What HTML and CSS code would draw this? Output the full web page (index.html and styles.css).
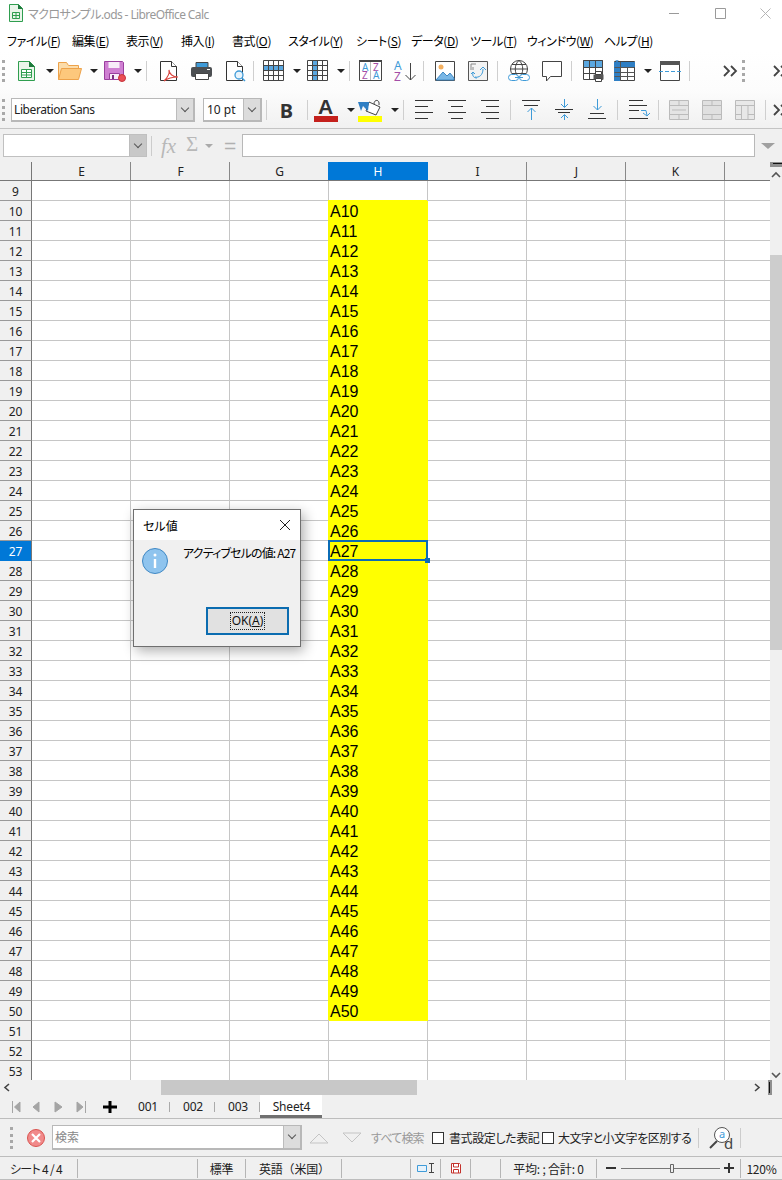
FILE: index.html
```html
<!DOCTYPE html>
<html lang="ja">
<head>
<meta charset="utf-8">
<title>マクロサンプル.ods - LibreOffice Calc</title>
<link rel="stylesheet" href="styles.css">
</head>
<body>
<div class="app">
  <header class="titlebar">
    <svg class="appicon" width="14" height="18" viewBox="0 0 14 18"><path d="M.5.5h9l4 4v13H.5z" fill="#eaf5ea" stroke="#2f9e4f"/><path d="M9 0l5 5H9z" fill="#1f7a3d"/><path d="M3.500 8.500h7v6h-7zM3.500 11.500h7M7 8.500v6" fill="none" stroke="#2f9e4f"/></svg>
    <span class="apptitle">マクロサンプル.ods - LibreOffice Calc</span>
    <div class="winbtns">
      <svg width="112" height="14" viewBox="0 0 112 14"><path d="M0 7.500h10" stroke="#9a9a9a"/><path d="M46.500 2.500h10v10h-10z" fill="none" stroke="#9a9a9a"/><path d="M91.500 2.500l10 10M101.500 2.500l-10 10" stroke="#b5b5b5"/></svg>
    </div>
  </header>
  <nav class="menubar">
    <span>ファイル(<u>F</u>)</span><span>編集(<u>E</u>)</span><span>表示(<u>V</u>)</span><span>挿入(<u>I</u>)</span><span>書式(<u>O</u>)</span><span>スタイル(<u>Y</u>)</span><span>シート(<u>S</u>)</span><span>データ(<u>D</u>)</span><span>ツール(<u>T</u>)</span><span>ウィンドウ(<u>W</u>)</span><span>ヘルプ(<u>H</u>)</span>
  </nav>
  <div class="toolbar t1">
    <i class="grip"></i>
    <svg class="i" viewBox="0 0 33 24"><path d="M8.500 2.500h11l5 5v14h-16z" fill="#eaf5ea" stroke="#2f9e4f"/><path d="M19 2l6 6h-6z" fill="#1f7a3d"/><path d="M11.500 10.500h10v8h-10z" fill="#fff" stroke="#2f9e4f"/><path d="M11.500 13.500h10M11.500 16h10M16.500 10.500v8" stroke="#2f9e4f"/></svg>
    <i class="d"></i>
    <svg class="i" viewBox="0 0 33 24"><path d="M4.500 20.500v-17h8l2 3h10v4" fill="#fbdcaa" stroke="#eda24a"/><path d="M4.500 20.500l3-11h20l-3 11z" fill="#fdc87c" stroke="#eda24a"/></svg>
    <i class="d"></i>
    <svg class="i" viewBox="0 0 33 24"><path d="M6.500 2.500h18l1 1v17h-19z" fill="#cf7fd2" stroke="#9a3f9e"/><path d="M10.500 3h11v6h-11z" fill="#f7ecf8"/><path d="M11.500 14.500h10v6h-10z" fill="#f7ecf8" stroke="#9a3f9e"/><path d="M14 16h2v4h-2z" fill="#7a2f7e"/><circle cx="24" cy="19" r="3.500" fill="#ea4f55" stroke="#c6343a"/></svg>
    <i class="d"></i>
    <i class="s"></i>
    <svg class="i" viewBox="0 0 33 24"><path d="M10.500 2.500h11l5 5v14h-16z" fill="#fff" stroke="#333"/><path d="M21.500 2.500v5h5" fill="#fff" stroke="#333"/><path d="M14 22c3-3 6-7 5-11 0 4 4 7 9 7-5 0-10 1-14 4z" fill="#fff" stroke="#d9453f" stroke-width="1.200"/></svg>
    <svg class="i" viewBox="0 0 33 24"><path d="M13 3.500h12v5H13z" fill="#3f9bd8" stroke="#444"/><rect x="8" y="8" width="21" height="10" rx="2" fill="#4c4f52"/><path d="M12.500 14.500h13v6h-13z" fill="#fff" stroke="#444"/><path d="M24 10.500h3" stroke="#fff"/></svg>
    <svg class="i" viewBox="0 0 33 24"><path d="M10.500 2.500h11l5 5v14h-16z" fill="#fff" stroke="#333"/><path d="M21.500 2.500v5h5" fill="#fff" stroke="#333"/><circle cx="23" cy="16" r="4" fill="#e8f4fc" stroke="#3f9bd8" stroke-width="1.300"/><path d="M26 19l3 3" stroke="#3f9bd8" stroke-width="1.500"/></svg>
    <i class="s"></i>
    <svg class="i" viewBox="0 0 33 24"><path d="M6.500 6.500h20v5h-20z" fill="#5aa7e0"/><path d="M6.500 1.500h20v20h-20zM6.500 6.500h20M6.500 11.500h20M6.500 16.500h20M11.500 1.500v20M16.500 1.500v20M21.500 1.500v20" fill="none" stroke="#444"/></svg>
    <i class="d"></i>
    <svg class="i" viewBox="0 0 33 24"><path d="M11.500 1.500h5v20h-5z" fill="#5aa7e0"/><path d="M6.500 1.500h20v20h-20zM6.500 6.500h20M6.500 11.500h20M6.500 16.500h20M11.500 1.500v20M16.500 1.500v20M21.500 1.500v20" fill="none" stroke="#444"/></svg>
    <i class="d"></i>
    <i class="s"></i>
    <svg class="i" viewBox="0 0 33 24"><path d="M6.500 2.500h22v19h-22z" fill="#fff" stroke="#444"/><path d="M6 1h23v2H6z" fill="#444"/><path d="M17.500 3v18" stroke="#bbb"/><text class="g b" x="9" y="12">A</text><text class="g p" x="9" y="20">Z</text><text class="g p" x="20" y="12">Z</text><text class="g b" x="20" y="20">A</text></svg>
    <svg class="i" viewBox="0 0 33 24"><text class="g2 b" x="8" y="11">A</text><text class="g2 p" x="8" y="22">Z</text><path d="M24.500 4v17M19.500 16l5 5 5-5" fill="none" stroke="#444"/></svg>
    <i class="s"></i>
    <svg class="i" viewBox="0 0 33 24"><path d="M8.500 2.500h19v19h-19z" fill="#fff" stroke="#444"/><circle cx="14" cy="8" r="2.500" fill="#f4b060"/><path d="M9 21l7-8 4 4 3-3 4 5v2z" fill="#79b7e6" stroke="#3f88c4"/></svg>
    <svg class="i" viewBox="0 0 33 24"><path d="M8.500 2.500h19v19h-19z" fill="#f3f3f3" stroke="#555"/><path d="M11 5h5M11 5v6M13 8v3" stroke="#888"/><path d="M15 18c4 1 8-2 8-8M20 11l3-3 3 3M13 14c-1 3 1 5 4 5M15 15l-2-2-2 2" fill="none" stroke="#3f9bd8"/></svg>
    <i class="s"></i>
    <svg class="i" viewBox="0 0 33 24"><circle cx="18" cy="10" r="8.500" fill="#fff" stroke="#444"/><path d="M18 1.500c-5 4-5 13 0 17 5-4 5-13 0-17zM9.500 10h17M11 5.500h14M11 14.500h14" fill="none" stroke="#444"/><rect x="7.500" y="15.500" width="10" height="6" rx="3" fill="#fff" stroke="#3f9bd8"/><rect x="18.500" y="15.500" width="10" height="6" rx="3" fill="#fff" stroke="#3f9bd8"/><path d="M14 18.500h8" stroke="#3f9bd8"/></svg>
    <svg class="i" viewBox="0 0 33 24"><path d="M8.500 2.500h19v15h-11l-4 4.500v-4.500h-4z" fill="#fff" stroke="#444"/></svg>
    <i class="s"></i>
    <svg class="i" viewBox="0 0 33 24"><path d="M8.500 1.500h19v19h-19z" fill="#fff" stroke="#444"/><path d="M8.500 1.500h19v7h-19z" fill="#5aa7e0" stroke="#444"/><path d="M8.500 8.500h19M8.500 14.500h19M14.500 1.500v19M20.500 1.500v19" stroke="#444" fill="none"/><rect x="18.500" y="15.500" width="10" height="5" fill="#555"/><path d="M20.500 12.500h6v3h-6zM20.500 19.500h6v3h-6z" fill="#fff" stroke="#444"/></svg>
    <svg class="i" viewBox="0 0 33 24"><path d="M6.500 2.500h20v19h-20z" fill="#fff" stroke="#444"/><path d="M6 3h21v5H6zM6 8h6v14H6z" fill="#2f7fc4"/><path d="M6.500 8.500h20M6.500 13.500h20M6.500 17.500h20M12.500 3v19M19.500 8v14" stroke="#555" fill="none"/><path d="M8 1l2 5M10 1L8 6M6.500 3.500h5" stroke="#2f7fc4"/></svg>
    <i class="d"></i>
    <svg class="i" viewBox="0 0 33 24"><path d="M8.500 2.500h19v19h-19z" fill="#fff" stroke="#444"/><path d="M8 2h20v4H8z" fill="#555"/><path d="M7 12.500h22" stroke="#3f9bd8" stroke-dasharray="4 2"/></svg>
    <i class="s"></i>
    <svg class="more m1" width="14" height="12" viewBox="0 0 14 12"><path d="M1 1l5 5-5 5M8 1l5 5-5 5" fill="none" stroke="#444" stroke-width="1.800"/></svg>
    <i class="grip g3"></i>
    <svg class="more m2" width="14" height="12" viewBox="0 0 14 12"><path d="M1 1l5 5-5 5M8 1l5 5-5 5" fill="none" stroke="#444" stroke-width="1.800"/></svg>
  </div>
  <div class="toolbar t2">
    <i class="grip"></i>
    <div class="combo fontname"><span>Liberation Sans</span><i class="cbtn"><i class="chev"></i></i></div>
    <div class="combo fontsize"><span>10 pt</span><i class="cbtn"><i class="chev"></i></i></div>
    <i class="s"></i>
    <span class="bold">B</span>
    <i class="s"></i>
    <svg class="i" viewBox="0 0 33 24"><text class="fa" x="7" y="16">A</text><path d="M3 18h24v6H3z" fill="#c4201c"/></svg>
    <i class="d"></i>
    <svg class="i" viewBox="0 0 33 24"><path d="M14 4l11 5-4 8-10-4z" fill="#fff" stroke="#444"/><path d="M3 4h11l-1 9-5-5-2 5z" fill="#2f7fc4"/><path d="M19 6c0-5 6-5 5 1" fill="none" stroke="#444"/><path d="M3 18h24v6H3z" fill="#ff0"/></svg>
    <i class="d"></i>
    <i class="s"></i>
    <svg class="i" viewBox="0 0 33 24"><path d="M8 2.500h18M8 8.500h13M8 14.500h18M8 20.500h13" stroke="#333"/></svg>
    <svg class="i" viewBox="0 0 33 24"><path d="M8 2.500h18M11 8.500h12M8 14.500h18M11 20.500h12" stroke="#333"/></svg>
    <svg class="i" viewBox="0 0 33 24"><path d="M8 2.500h18M13 8.500h13M8 14.500h18M13 20.500h13" stroke="#333"/></svg>
    <i class="s"></i>
    <svg class="i" viewBox="0 0 33 24"><path d="M8 2.500h18M10 7.500h14" stroke="#333"/><path d="M17.500 22V10M13.500 14l4-4 4 4" fill="none" stroke="#3f9bd8"/></svg>
    <svg class="i" viewBox="0 0 33 24"><path d="M8 11.500h18M11 14.500h12" stroke="#333"/><path d="M17.500 1v8M14 6l3.500 3.500L21 6M17.500 22v-5M14 20l3.500-3.500L21 20" fill="none" stroke="#3f9bd8"/></svg>
    <svg class="i" viewBox="0 0 33 24"><path d="M8 20.500h18M10 15.500h14" stroke="#333"/><path d="M17.500 1v11M13.500 8l4 4 4-4" fill="none" stroke="#3f9bd8"/></svg>
    <i class="s"></i>
    <svg class="i" viewBox="0 0 33 24"><path d="M8 2.500h14M8 7.500h18M8 12.500h10M8 20.500h19" stroke="#333"/><path d="M20 12.500h5l1 5M22 15l4 3 3-3" fill="none" stroke="#3f9bd8"/></svg>
    <i class="s"></i>
    <svg class="i" viewBox="0 0 33 24"><path d="M7.500 2.500h19v19h-19z" fill="#e4e4e4" stroke="#bbb"/><path d="M7.500 7.500h19M7.500 16.500h19M17 2.500v5M17 16.500v5M10 12h14" stroke="#bbb" fill="none"/></svg>
    <svg class="i" viewBox="0 0 33 24"><path d="M7.500 2.500h19v19h-19z" fill="#e0e0e0" stroke="#bbb"/><path d="M7.500 7.500h19M7.500 16.500h19M17 2.500v5M17 16.500v5" stroke="#bbb" fill="none"/></svg>
    <svg class="i" viewBox="0 0 33 24"><path d="M7.500 2.500h19v19h-19z" fill="#e8e8e8" stroke="#bbb"/><path d="M7.500 7.500h19M13.500 7.500v14M20 7.500v14M7.500 16.500h6M20 16.500h6.500" stroke="#bbb" fill="none"/></svg>
    <i class="s"></i>
    <svg class="more m3" width="14" height="12" viewBox="0 0 14 12"><path d="M1 1l5 5-5 5M8 1l5 5-5 5" fill="none" stroke="#444" stroke-width="1.800"/></svg>
  </div>
  <div class="formulabar">
    <div class="combo namebox"><span></span><i class="cbtn dark"><i class="chev"></i></i></div>
    <i class="fsep"></i>
    <span class="fx">fx</span>
    <span class="sigma">Σ</span>
    <i class="d light"></i>
    <span class="eq">=</span>
    <div class="finput"></div>
    <i class="d big"></i>
  </div>
  <main class="sheetwrap">
    <div class="sheet">
      <div class="colhead">
        <div class="corner"></div>
        <div class="ch">E</div><div class="ch">F</div><div class="ch">G</div><div class="ch on">H</div><div class="ch">I</div><div class="ch">J</div><div class="ch">K</div>
      </div>
      <div class="r"><span class="h">9</span></div>
      <div class="r"><span class="h">10</span><span class="v">A10</span></div>
      <div class="r"><span class="h">11</span><span class="v">A11</span></div>
      <div class="r"><span class="h">12</span><span class="v">A12</span></div>
      <div class="r"><span class="h">13</span><span class="v">A13</span></div>
      <div class="r"><span class="h">14</span><span class="v">A14</span></div>
      <div class="r"><span class="h">15</span><span class="v">A15</span></div>
      <div class="r"><span class="h">16</span><span class="v">A16</span></div>
      <div class="r"><span class="h">17</span><span class="v">A17</span></div>
      <div class="r"><span class="h">18</span><span class="v">A18</span></div>
      <div class="r"><span class="h">19</span><span class="v">A19</span></div>
      <div class="r"><span class="h">20</span><span class="v">A20</span></div>
      <div class="r"><span class="h">21</span><span class="v">A21</span></div>
      <div class="r"><span class="h">22</span><span class="v">A22</span></div>
      <div class="r"><span class="h">23</span><span class="v">A23</span></div>
      <div class="r"><span class="h">24</span><span class="v">A24</span></div>
      <div class="r"><span class="h">25</span><span class="v">A25</span></div>
      <div class="r"><span class="h">26</span><span class="v">A26</span></div>
      <div class="r"><span class="h on">27</span><span class="v">A27<i class="cur"><i class="handle"></i></i></span></div>
      <div class="r"><span class="h">28</span><span class="v">A28</span></div>
      <div class="r"><span class="h">29</span><span class="v">A29</span></div>
      <div class="r"><span class="h">30</span><span class="v">A30</span></div>
      <div class="r"><span class="h">31</span><span class="v">A31</span></div>
      <div class="r"><span class="h">32</span><span class="v">A32</span></div>
      <div class="r"><span class="h">33</span><span class="v">A33</span></div>
      <div class="r"><span class="h">34</span><span class="v">A34</span></div>
      <div class="r"><span class="h">35</span><span class="v">A35</span></div>
      <div class="r"><span class="h">36</span><span class="v">A36</span></div>
      <div class="r"><span class="h">37</span><span class="v">A37</span></div>
      <div class="r"><span class="h">38</span><span class="v">A38</span></div>
      <div class="r"><span class="h">39</span><span class="v">A39</span></div>
      <div class="r"><span class="h">40</span><span class="v">A40</span></div>
      <div class="r"><span class="h">41</span><span class="v">A41</span></div>
      <div class="r"><span class="h">42</span><span class="v">A42</span></div>
      <div class="r"><span class="h">43</span><span class="v">A43</span></div>
      <div class="r"><span class="h">44</span><span class="v">A44</span></div>
      <div class="r"><span class="h">45</span><span class="v">A45</span></div>
      <div class="r"><span class="h">46</span><span class="v">A46</span></div>
      <div class="r"><span class="h">47</span><span class="v">A47</span></div>
      <div class="r"><span class="h">48</span><span class="v">A48</span></div>
      <div class="r"><span class="h">49</span><span class="v">A49</span></div>
      <div class="r"><span class="h">50</span><span class="v">A50</span></div>
      <div class="r"><span class="h">51</span></div>
      <div class="r"><span class="h">52</span></div>
      <div class="r"><span class="h">53</span></div>
    </div>
    <div class="vscroll">
      <i class="notch"><i class="dash"></i></i>
      <svg class="varrow" width="12" height="10" viewBox="0 0 12 10"><path d="M2 7l4-4 4 4" fill="none" stroke="#555" stroke-width="1.600"/></svg>
      <i class="vtrack1"></i>
      <i class="vthumb"></i>
      <i class="vtrack2"></i>
      <svg class="varrow" width="12" height="10" viewBox="0 0 12 10"><path d="M2 3l4 4 4-4" fill="none" stroke="#555" stroke-width="1.600"/></svg>
    </div>
  </main>
  <div class="hscroll">
    <svg class="harrow" width="14" height="15" viewBox="0 0 14 15"><path d="M9 4L5 7.500 9 11" fill="none" stroke="#444" stroke-width="1.600"/></svg>
    <i class="htrack1"></i>
    <i class="hthumb"></i>
    <i class="htrack2"></i>
    <svg class="harrow" width="14" height="15" viewBox="0 0 14 15"><path d="M5 4l4 3.500L5 11" fill="none" stroke="#444" stroke-width="1.600"/></svg>
    <i class="hnotch"><i class="hdash"></i></i>
  </div>
  <div class="tabbar">
    <svg class="nav" width="80" height="14" viewBox="0 0 80 14"><path d="M1.500 1v12M9 2L3.500 7 9 12zM28 2l-6 5 6 5zM44 2l7 5-7 5zM66 2l6 5-6 5zM74.500 1v12" fill="#a5a5a5" stroke="#a5a5a5"/></svg>
    <svg class="plus" width="14" height="14" viewBox="0 0 14 14"><path d="M7 1v12M0 7h14" stroke="#000" stroke-width="3"/></svg>
    <span class="tab">001</span><span class="tab">002</span><span class="tab">003</span><span class="tab cur-tab">Sheet4</span>
  </div>
  <div class="findbar">
    <i class="grip g4"></i>
    <svg class="fclose" width="20" height="20" viewBox="0 0 20 20"><circle cx="10" cy="10" r="8.500" fill="#f18a8a" stroke="#d9534f"/><path d="M6 6l8 8M14 6l-8 8" stroke="#fff" stroke-width="2.200"/></svg>
    <div class="combo findbox"><span>検索</span><i class="cbtn"><i class="chev"></i></i></div>
    <svg class="tri" width="20" height="12" viewBox="0 0 20 12"><path d="M1 11l9-9 9 9z" fill="none" stroke="#c4c4c4"/></svg>
    <svg class="tri t-dn" width="20" height="12" viewBox="0 0 20 12"><path d="M1 1l9 9 9-9z" fill="none" stroke="#c4c4c4"/></svg>
    <span class="findall">すべて検索</span>
    <i class="cb"></i><span class="cbl l1">書式設定した表記</span>
    <i class="cb"></i><span class="cbl l2">大文字と小文字を区別する</span>
    <i class="fs"></i>
    <svg class="fi" width="24" height="24" viewBox="0 0 24 24"><circle cx="13" cy="9" r="7.500" fill="#fff" stroke="#555"/><text class="gb" x="10" y="12">a</text><path d="M8 15l-7 7" stroke="#444" stroke-width="2"/><text class="gk" x="15" y="23">d</text></svg>
    <i class="fs f2"></i>
  </div>
  <footer class="statusbar">
    <span class="st first">シート 4 / 4</span>
    <span class="st"></span>
    <span class="st c">標準</span>
    <span class="st lang">英語（米国）</span>
    <span class="st"></span>
    <span class="st c"><svg width="20" height="12" viewBox="0 0 20 12"><path d="M1.500 3.500h9v6h-9z" fill="#e6f2fb" stroke="#3f9bd8"/><path d="M13 1.500h5M13 10.500h5M15.500 1.500v9" stroke="#444"/></svg></span>
    <span class="st c"><svg width="10" height="12" viewBox="0 0 10 12"><path d="M.5 1.500h8l1 1v8.500h-9z" fill="#fff" stroke="#c4322c"/><path d="M2.500 2v3h5V2M2.500 11V7.500h5V11" fill="none" stroke="#c4322c"/></svg></span>
    <span class="st"></span>
    <span class="st c">平均: ; 合計: 0</span>
    <span class="st zoom">
      <svg width="129" height="14" viewBox="0 0 129 14"><path d="M0 7h10M118 7h10M123 2v10" stroke="#333" stroke-width="2"/><path d="M15 7.500h99" stroke="#777"/><path d="M64.500 3.500h3v8h-3z" fill="#eee" stroke="#666"/></svg>
    </span>
    <span class="st c">120%</span>
  </footer>
  <div class="dialog">
    <div class="dtitle"><span>セル値</span><svg width="12" height="12" viewBox="0 0 12 12"><path d="M1 1l10 10M11 1L1 11" stroke="#222"/></svg></div>
    <div class="dbody">
      <div class="dmsg">
        <svg width="26" height="26" viewBox="0 0 26 26"><circle cx="13" cy="13" r="12.500" fill="#8fc4ee" stroke="#3f88c4"/><circle cx="13" cy="7" r="1.500" fill="#fff"/><path d="M13 11v9" stroke="#fff" stroke-width="2.400"/></svg>
        <span>アクティブセルの値: A27</span>
      </div>
      <div class="dbtnrow"><button class="okbtn"><span>OK(<u>A</u>)</span></button></div>
    </div>
  </div>
</div>
</body>
</html>
```
FILE: styles.css
```css
* { box-sizing: border-box; }
html, body { margin: 0; padding: 0; }
body { background: #f0f0f0; }
i { font-style: normal; display: block; flex: none; }
svg { display: block; flex: none; overflow: visible; }
.app {
  position: relative;
  width: 782px;
  height: 1180px;
  overflow: hidden;
  display: flex;
  flex-direction: column;
  font-family: "Noto Sans", "Noto Sans CJK JP", sans-serif;
  font-size: 12px;
  color: #000;
  font-feature-settings: "palt";
}
.titlebar {
  height: 28px;
  background: #fff;
  display: flex;
  align-items: center;
  padding-left: 9px;
}
.appicon { margin-top: -2px; }
.apptitle { margin-left: 5px; font-size: 12px; color: #999; white-space: nowrap; letter-spacing: -.6px; }
.winbtns { margin-left: auto; margin-right: 1px; margin-top: -2px; }
.menubar {
  height: 24px;
  background: #fff;
  padding-left: 7px;
  display: grid;
  grid-template-columns: 65px 54px 55px 51px 56px 68px 55px 59px 57px 77px auto;
  align-items: center;
  font-family: "Noto Sans CJK JP", sans-serif;
  font-size: 12px;
  letter-spacing: -.4px;
  white-space: nowrap;
}
.toolbar { display: flex; align-items: center; }
.t1 { height: 38px; background: linear-gradient(#fff, #fcfcfc); padding-left: 2px; }
.t2 { height: 39px; background: linear-gradient(#fcfcfc, #f1f1f1); padding: 2px 0 0 2px; border-bottom: 1px solid #c4c4c4; }
.grip { width: 3px; height: 22px; border-left: 3px dotted #a8a8a8; margin-right: 5px; }
.t2 .grip { margin-right: 6px; }
.i { width: 33px; height: 24px; }
.d { width: 11px; height: 24px; position: relative; }
.d::after {
  content: "";
  position: absolute;
  left: 3px;
  top: 10px;
  border: 4px solid transparent;
  border-top: 4px solid #222;
  border-bottom: 0;
}
.s { width: 1px; height: 20px; background: #cfcfcf; margin: 0 3px 0 4px; }
.g { font: 10px "Noto Sans", sans-serif; }
.g2 { font: 12px "Noto Sans", sans-serif; }
.b { fill: #3f9bd8; }
.p { fill: #a44ea8; }
.fa { font: bold 21px "Liberation Sans", sans-serif; fill: #333; }
.m1 { margin-left: 30px; }
.g3 { margin: 0 0 0 5px; width: 3px; }
.t1 .g3 { margin-right: 0; }
.m2 { margin-left: 28px; }
.m3 { margin-left: 4px; }
.combo {
  display: flex;
  flex: none;
  height: 24px;
  background: #fff;
  border: 2px solid #b8b8b8;
  border-width: 1px 2px 2px 1px;
  align-items: center;
  font-size: 12px;
  color: #222;
}
.combo span { flex: 1; padding-left: 2px; white-space: nowrap; overflow: hidden; }
.cbtn { width: 17px; height: 100%; background: #dcdcdc; border-left: 1px solid #bcbcbc; position: relative; }
.cbtn.dark { background: #c8c8c8; }
.chev {
  position: absolute;
  left: 5px;
  top: 6px;
  width: 6px;
  height: 6px;
  border-right: 1px solid #555;
  border-bottom: 1px solid #555;
  transform: rotate(45deg);
}
.fontname { width: 184px; margin-right: 8px; letter-spacing: -.4px; }
.fontsize { width: 59px; }
.fontsize span { padding-left: 3px; }
.bold { flex: none; width: 33px; text-align: center; font: bold 20px "Noto Sans", sans-serif; color: #333; }
.formulabar {
  height: 33px;
  background: #f0f0f0;
  display: flex;
  align-items: center;
  padding-left: 3px;
}
.namebox { width: 144px; height: 23px; border-width: 1px; border-color: #c0c0c0; }
.fsep { width: 1px; height: 20px; background: #ccc; margin: 0 9px 0 4px; }
.fx { width: 25px; font: italic 21px "Liberation Serif", serif; color: #b8b8b8; line-height: 22px; }
.sigma { width: 17px; font: 21px "Liberation Serif", serif; color: #b8b8b8; line-height: 22px; margin-top: -3px; }
.d.light { width: 20px; }
.d.light::after { left: 2px; border-top-color: #aaa; }
.eq { width: 18px; margin-left: 1px; font: 21px "Liberation Sans", sans-serif; color: #b0b0b0; line-height: 22px; }
.finput { width: 514px; height: 23px; background: #fff; border: 1px solid #b8b8b8; }
.d.big { width: 22px; margin-left: 5px; }
.d.big::after { border-width: 6px 7px 0; left: 1px; top: 9px; border-top-color: #a0a0a0; }
.sheetwrap { height: 918px; display: flex; background: #fff; }
.sheet { width: 770px; overflow: hidden; }
.colhead { display: flex; height: 19px; background: #f0f0f0; border-bottom: 1px solid #777; }
.corner { width: 32px; border-right: 1px solid #777; }
.ch { width: 99px; padding: 1px 0 0 1px; text-align: center; border-right: 1px solid #888; font-size: 12px; line-height: 18px; color: #222; }
.ch.on { background: #0078d7; color: #fff; border-right-color: #0078d7; margin-left: -1px; width: 100px; }
.r {
  display: flex;
  height: 20px;
  border-bottom: 1px solid #c6c6c6;
  background: repeating-linear-gradient(90deg, #c6c6c6 0 1px, #fff 1px 99px) 130px 0 / 99px 100% repeat-x;
}
.h {
  width: 32px;
  height: 20px;
  flex: none;
  padding-top: 1px;
  text-align: center;
  background: #f0f0f0;
  border-right: 1px solid #777;
  border-bottom: 1px solid #999;
  font-size: 12px;
  line-height: 19px;
  color: #222;
}
.h.on { background: #0078d7; color: #fff; border-bottom-color: #0078d7; }
.v {
  position: relative;
  width: 99px;
  height: 20px;
  flex: none;
  margin-left: 297px;
  padding: 1px 0 0 1px;
  background: #ff0;
  box-shadow: -1px -1px 0 #ff0;
  font: 16px/20px "Liberation Sans", sans-serif;
  color: #000;
}
.cur { position: absolute; z-index: 1; left: -1px; top: -1px; width: 100px; height: 21px; border: 2px solid #0b6cb5; }
.handle { position: absolute; right: -4px; bottom: -4px; width: 5px; height: 5px; background: #0b6cb5; }
.vscroll { width: 12px; background: #f0f0f0; display: flex; flex-direction: column; }
.notch { height: 5px; background: #8f8f8f; position: relative; }
.dash { position: absolute; left: 3px; right: 0; top: 1px; height: 1px; background: #111; }
.varrow { margin: 3px 0 0; }
.vtrack1 { height: 75px; }
.vthumb { height: 395px; background: #cdcdcd; }
.vtrack2 { flex: 1; }
.hscroll { height: 15px; display: flex; background: #f0f0f0; }
.harrow { width: 14px; }
.htrack1 { width: 147px; }
.hthumb { width: 256px; background: #c8c8c8; }
.htrack2 { width: 333px; }
.hnotch { width: 4px; background: #8f8f8f; margin-left: 4px; position: relative; }
.hdash { position: absolute; left: 1px; top: 2px; bottom: 2px; width: 1px; background: #111; }
.tabbar {
  height: 24px;
  background: #f0f0f0;
  border-bottom: 1px solid #bdbdbd;
  display: flex;
  align-items: center;
  padding-left: 11px;
}
.plus { margin-left: 12px; margin-right: 8px; }
.tab {
  width: 45px;
  height: 23px;
  padding-left: 1px;
  line-height: 24px;
  text-align: center;
  font-size: 12px;
  color: #222;
  letter-spacing: -.2px;
  background: linear-gradient(#aaa, #aaa) right center / 1px 10px no-repeat;
}
.cur-tab { width: 62px; background: #fff; border-bottom: 3px solid #707070; }
.findbar {
  height: 38px;
  background: #f0f0f0;
  border-bottom: 1px solid #bdbdbd;
  display: flex;
  align-items: center;
  padding-left: 10px;
}
.g4 { margin-right: 13px; }
.findbox { width: 250px; height: 25px; margin-left: 6px; }
.findbox span { color: #888; }
.tri { margin-left: 7px; }
.tri.t-dn { margin-left: 13px; }
.findall { margin-left: 9px; width: 61px; color: #999; font-family: "Noto Sans CJK JP", sans-serif; letter-spacing: -.8px; white-space: nowrap; }
.cb { width: 12px; height: 12px; border: 1px solid #333; background: #fff; }
.cbl { font-family: "Noto Sans CJK JP", sans-serif; color: #222; white-space: nowrap; }
.l1 { width: 93px; margin-left: 5px; letter-spacing: -.4px; }
.l2 { width: 133px; margin-left: 4px; letter-spacing: -.5px; }
.fs { width: 1px; height: 20px; background: #ccc; margin-left: 7px; }
.fi { margin-left: 10px; }
.gb { font: 11px "Noto Sans", sans-serif; fill: #3f9bd8; }
.gk { font: 15px "Noto Sans", sans-serif; fill: #444; }
.f2 { margin-left: 7px; }
.statusbar {
  height: 23px;
  background: #f0f0f0;
  border-bottom: 1px solid #bdbdbd;
  display: grid;
  grid-template-columns: 78px 120px 48px 96px 69px 30px 30px 30px 96px 144px 1fr;
  align-items: center;
  font-size: 12px;
  font-family: "Noto Sans CJK JP", sans-serif;
  letter-spacing: -.2px;
  color: #222;
  white-space: nowrap;
}
.st { height: 19px; border-right: 1px solid #b5b5b5; padding-left: 10px; display: flex; align-items: center; line-height: 19px; }
.st.first { letter-spacing: -.7px; }
.st.lang { padding-left: 13px; font-feature-settings: normal; letter-spacing: -.2px; }
.st.c { justify-content: center; padding-left: 0; }
.st.zoom { padding-left: 9px; }
.st:last-child { border-right: 0; }
.dialog {
  position: absolute;
  z-index: 2;
  left: 133px;
  top: 509px;
  width: 168px;
  height: 138px;
  border: 1px solid #6f6f6f;
  background: #f0f0f0;
  box-shadow: 3px 4px 12px rgba(0, 0, 0, .32);
  display: flex;
  flex-direction: column;
  font-family: "Noto Sans CJK JP", sans-serif;
}
.dtitle { height: 30px; background: #fff; display: flex; align-items: center; justify-content: space-between; padding: 0 9px; flex: none; }
.dbody { flex: 1; display: flex; flex-direction: column; }
.dmsg { display: flex; padding: 8px 0 0 8px; height: 67px; }
.dmsg span { margin-left: 15px; margin-top: -4px; letter-spacing: -.85px; white-space: nowrap; line-height: 17px; }
.dbtnrow { display: flex; justify-content: flex-end; padding-right: 11px; }
.okbtn {
  width: 83px;
  height: 28px;
  border: 2px solid #0b6cb0;
  background: #e1e1e1;
  padding: 0;
  font: 12px "Noto Sans", "Noto Sans CJK JP", sans-serif;
  color: #111;
  display: flex;
  align-items: center;
  justify-content: center;
}
.okbtn span { border: 1px dotted #222; padding: 0 1px; line-height: 16px; }
```
